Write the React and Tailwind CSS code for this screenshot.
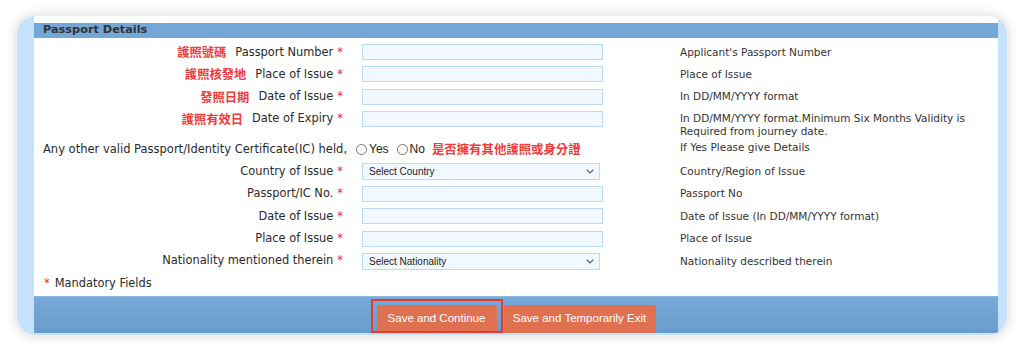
import React from "react";

const dv = { fontFamily: '"DejaVu Sans", Verdana, sans-serif' };
const cjk = { fontFamily: '"Noto Sans CJK TC", "Noto Sans CJK SC", sans-serif' };
const lib = { fontFamily: '"Liberation Sans", Arial, sans-serif' };

function Star() {
  return <span className="text-[#e0322f] ml-[4px]">*</span>;
}

function Label({ zh, en }) {
  return (
    <div className="w-[309px] shrink-0 flex justify-end items-center text-[11.4px] text-[#2a2a2a] whitespace-nowrap" style={dv}>
      {zh && (
        <span className="text-[#ef3b3b] font-bold text-[12.3px] mr-[9px]" style={cjk}>
          {zh}
        </span>
      )}
      <span>{en}</span>
      <Star />
    </div>
  );
}

function Input() {
  return <div className="ml-[19px] w-[241px] h-[16px] shrink-0 bg-[#f2f8ff] border border-[#b9dbfa]" />;
}

function Select({ text }) {
  return (
    <div className="ml-[19px] w-[241px] shrink-0">
      <div className="w-[238px] h-[17px] bg-[#f2f8ff] border border-[#b9dbfa] flex items-center justify-between pl-[6px] pr-[5px]">
        <span className="text-[10px] text-[#222]" style={lib}>{text}</span>
        <svg width="8" height="5" viewBox="0 0 8 5" fill="none">
          <path d="M0.7 0.7 L4 4 L7.3 0.7" stroke="#555" strokeWidth="1.1" />
        </svg>
      </div>
    </div>
  );
}

function Desc({ children, cls = "" }) {
  return (
    <div className={"w-[290px] text-[10.5px] leading-[13px] text-[#333] " + cls} style={dv}>
      {children}
    </div>
  );
}

function Row({ zh, en, field, desc, h = "h-[22.3px]" }) {
  return (
    <div className={"flex items-center " + h}>
      <Label zh={zh} en={en} />
      {field}
      <div className="ml-[77px]">
        <Desc>{desc}</Desc>
      </div>
    </div>
  );
}

function Radio({ label }) {
  return (
    <span className="inline-flex items-center mr-[8px]">
      <span className="w-[11px] h-[11px] rounded-full border border-[#777] bg-white mr-[2px]" />
      <span className="text-[12px] text-[#222]" style={lib}>{label}</span>
    </span>
  );
}

export default function App() {
  return (
    <div className="w-[1024px] h-[353px] bg-white pt-[16px] pl-[17px]">
      <div className="w-[990px] h-[319px] rounded-[19px] bg-[#c5e2fc] overflow-hidden pl-[17px] pr-[9px] pb-[2px] shadow-[0_0_0_3px_#eeeeee,0_0_8px_5px_rgba(0,0,0,0.07)]">
        <div className="bg-white h-full flex flex-col">
          <div className="h-[7px] shrink-0" />
          <div className="h-[15px] shrink-0 bg-[#74a7d6] flex items-center pl-[9px]">
            <span className="text-[11.3px] font-bold text-[#333]" style={dv}>Passport Details</span>
          </div>
          <div className="mt-[3px] flex flex-col">
            <Row zh="護照號碼" en="Passport Number" field={<Input />} desc="Applicant's Passport Number" />
            <Row zh="護照核發地" en="Place of Issue" field={<Input />} desc="Place of Issue" />
            <Row zh="發照日期" en="Date of Issue" field={<Input />} desc="In DD/MM/YYYY format" />
            <div className="flex items-start h-[30.4px] pt-[3px]">
              <div className="h-[16px] flex items-center">
                <Label zh="護照有效日" en="Date of Expiry" />
                <Input />
              </div>
              <div className="ml-[77px] pt-[1px]">
                <Desc>In DD/MM/YYYY format.Minimum Six Months Validity is Required from journey date.</Desc>
              </div>
            </div>
            <div className="flex items-center h-[22px]">
              <div className="w-[646px] shrink-0 flex items-center pl-[9px] whitespace-nowrap">
                <span className="text-[11.5px] text-[#2a2a2a] mr-[9px]" style={dv}>
                  Any other valid Passport/Identity Certificate(IC) held,
                </span>
                <Radio label="Yes" />
                <Radio label="No" />
                <span className="text-[#ef3b3b] font-bold text-[12.4px] -ml-[1px]" style={cjk}>
                  是否擁有其他護照或身分證
                </span>
              </div>
              <div className="-mt-[4px]">
                <Desc>If Yes Please give Details</Desc>
              </div>
            </div>
            <Row en="Country of Issue" h="h-[22.4px]" field={<Select text="Select Country" />} desc="Country/Region of Issue" />
            <Row en="Passport/IC No." h="h-[22.4px]" field={<Input />} desc="Passport No" />
            <Row en="Date of Issue" h="h-[22.4px]" field={<Input />} desc="Date of Issue (In DD/MM/YYYY format)" />
            <Row en="Place of Issue" h="h-[22.4px]" field={<Input />} desc="Place of Issue" />
            <Row en="Nationality mentioned therein" h="h-[22.4px]" field={<Select text="Select Nationality" />} desc="Nationality described therein" />
            <div className="h-[22.4px] flex items-center pl-[10px] text-[11.4px] text-[#2a2a2a]" style={dv}>
              <span className="text-[#e0322f] mr-[5px]">*</span>
              <span>Mandatory Fields</span>
            </div>
          </div>
          <div className="mt-auto h-[37px] shrink-0 bg-gradient-to-b from-[#78aad9] to-[#6a9bca] border-t border-[#8db8e0] flex justify-center items-end">
            <div className="relative">
              <div className="absolute -left-[6px] -right-[6px] -top-[6px] bottom-0 border-2 border-[#e8392b]" />
              <div className="h-[28px] w-[120px] bg-[#e07150] rounded-t-[2px] flex items-center justify-center text-white text-[11.5px]" style={lib}>
                Save and Continue
              </div>
            </div>
            <div className="ml-[7px] h-[28px] w-[152px] bg-[#e07150] rounded-t-[2px] flex items-center justify-center text-white text-[11.5px]" style={lib}>
              Save and Temporarily Exit
            </div>
          </div>
        </div>
      </div>
    </div>
  );
}
